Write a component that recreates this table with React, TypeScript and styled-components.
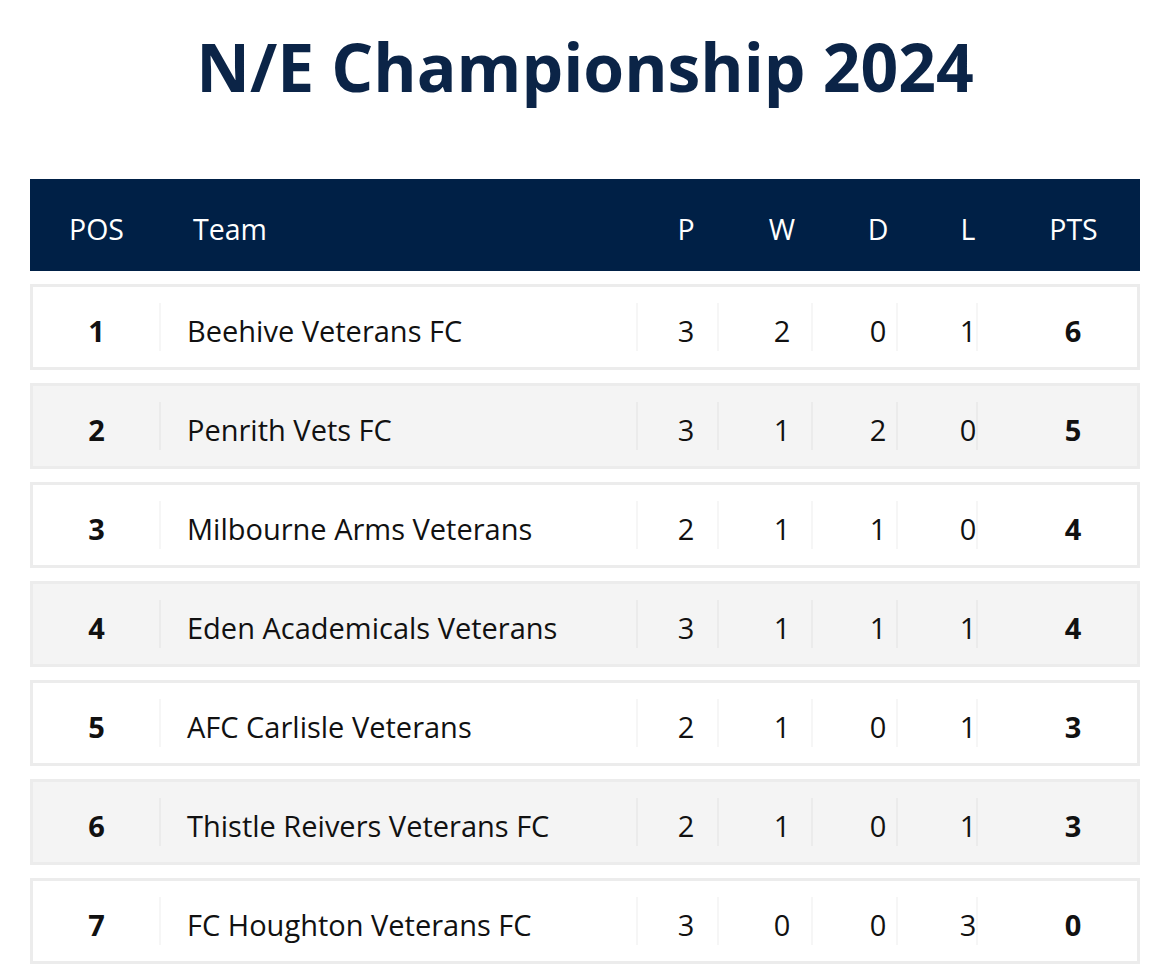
import styled, { createGlobalStyle } from "styled-components";

const GlobalStyle = createGlobalStyle`
  body {
    margin: 0;
    background: #ffffff;
    font-family: "Open Sans", "Noto Sans", sans-serif;
    color: #111111;
  }
`;

type Team = { pos: number; name: string; p: number; w: number; d: number; l: number; pts: number };

const teams: Team[] = [
  { pos: 1, name: "Beehive Veterans FC", p: 3, w: 2, d: 0, l: 1, pts: 6 },
  { pos: 2, name: "Penrith Vets FC", p: 3, w: 1, d: 2, l: 0, pts: 5 },
  { pos: 3, name: "Milbourne Arms Veterans", p: 2, w: 1, d: 1, l: 0, pts: 4 },
  { pos: 4, name: "Eden Academicals Veterans", p: 3, w: 1, d: 1, l: 1, pts: 4 },
  { pos: 5, name: "AFC Carlisle Veterans", p: 2, w: 1, d: 0, l: 1, pts: 3 },
  { pos: 6, name: "Thistle Reivers Veterans FC", p: 2, w: 1, d: 0, l: 1, pts: 3 },
  { pos: 7, name: "FC Houghton Veterans FC", p: 3, w: 0, d: 0, l: 3, pts: 0 },
];

// column widths follow the faint dividers; pad nudges the centred text
const stats = [
  { key: "p", label: "P", width: 81, pad: 17 },
  { key: "w", label: "W", width: 94, pad: 34 },
  { key: "d", label: "D", width: 85, pad: 47 },
  { key: "l", label: "L", width: 80, pad: 62 },
] as const;

const Page = styled.div`
  width: 1110px;
  margin: 0 auto;
  padding-top: 21px;
`;

const Title = styled.h1`
  margin: 0 0 68px;
  text-align: center;
  font-size: 66px;
  font-weight: 700;
  line-height: 90px;
  color: #0b2447;
`;

const HeaderBar = styled.div`
  display: flex;
  align-items: center;
  height: 92px;
  box-sizing: border-box;
  padding: 8px 3px 0;
  background: #002046;
  color: #ffffff;
  font-size: 28.5px;
`;

const Rows = styled.div`
  display: flex;
  flex-direction: column;
  gap: 13px;
  margin-top: 13px;
`;

const Row = styled.div<{ $shaded: boolean }>`
  display: flex;
  align-items: center;
  height: 86px;
  box-sizing: border-box;
  padding-top: 6px;
  border: 3px solid #ececec;
  background: ${(p) => (p.$shaded ? "#f4f4f4" : "#ffffff")};
  font-size: 29px;
`;

const Cell = styled.div<{ $width: number; $pad?: number; $bold?: boolean; $divider?: boolean }>`
  position: relative;
  box-sizing: border-box;
  flex: 0 0 ${(p) => p.$width}px;
  padding-left: ${(p) => p.$pad ?? 0}px;
  text-align: center;
  font-weight: ${(p) => (p.$bold ? 700 : 400)};

  &::before {
    content: "";
    display: ${(p) => (p.$divider ? "block" : "none")};
    position: absolute;
    left: -1px;
    top: 50%;
    width: 2px;
    height: 48px;
    margin-top: -27px;
    background: rgba(0, 0, 0, 0.035);
  }
`;

const NameCell = styled.div<{ $pad: number; $divider?: boolean }>`
  position: relative;
  flex: 0 0 477px;
  box-sizing: border-box;
  padding-left: ${(p) => p.$pad}px;

  &::before {
    content: "";
    display: ${(p) => (p.$divider ? "block" : "none")};
    position: absolute;
    left: -1px;
    top: 50%;
    width: 2px;
    height: 48px;
    margin-top: -27px;
    background: rgba(0, 0, 0, 0.035);
  }
`;

const App = () => (
  <Page>
    <GlobalStyle />
    <Title>N/E Championship 2024</Title>
    <HeaderBar>
      <Cell $width={127}>POS</Cell>
      <NameCell $pad={33}>Team</NameCell>
      {stats.map((s) => (
        <Cell key={s.key} $width={s.width} $pad={s.pad}>
          {s.label}
        </Cell>
      ))}
      <Cell $width={160} $pad={33}>
        PTS
      </Cell>
    </HeaderBar>
    <Rows>
      {teams.map((t, i) => (
        <Row key={t.pos} $shaded={i % 2 === 1}>
          <Cell $width={127} $bold>
            {t.pos}
          </Cell>
          <NameCell $pad={27} $divider>
            {t.name}
          </NameCell>
          {stats.map((s) => (
            <Cell key={s.key} $width={s.width} $pad={s.pad} $divider>
              {t[s.key]}
            </Cell>
          ))}
          <Cell $width={160} $pad={32} $bold $divider>
            {t.pts}
          </Cell>
        </Row>
      ))}
    </Rows>
  </Page>
);

export default App;
